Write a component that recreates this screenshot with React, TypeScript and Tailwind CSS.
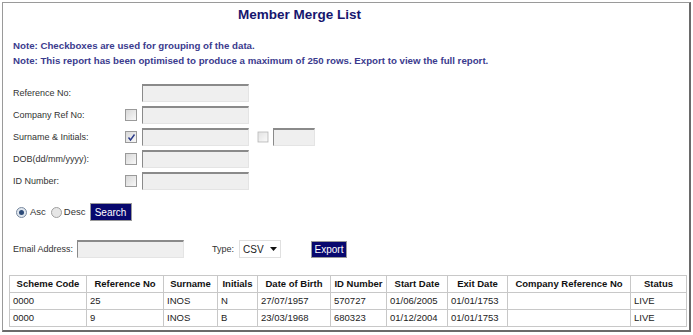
import React from 'react';

const font = { fontFamily: '"Liberation Sans", Arial, sans-serif' };

function Box({ checked = false }: { checked?: boolean }) {
  return (
    <span className="flex h-[12px] w-[12px] items-center justify-center border border-[#9a9a9a] bg-gradient-to-br from-[#d8d8d8] to-[#f8f8f8]">
      {checked && (
        <svg width="9" height="9" viewBox="0 0 9 9">
          <path d="M1.5 4.5 L3.5 7 L7.5 1.5" fill="none" stroke="#2a3a8a" strokeWidth="1.4" />
        </svg>
      )}
    </span>
  );
}

function Field({ w = 'w-[107px]' }: { w?: string }) {
  return <span className={`block h-[18px] shrink-0 ${w} border-t-2 border-l border-t-[#8a8a8a] border-l-[#8a8a8a] border-r border-b border-r-[#e4e4e4] border-b-[#e4e4e4] bg-[#efefef]`} />;
}

function Row({ label, box, checked, extra }: { label: string; box?: boolean; checked?: boolean; extra?: boolean }) {
  return (
    <div className="flex h-[22px] items-center">
      <span className="w-[122px] shrink-0 pl-[10px] text-[9px] text-[#333]">{label}</span>
      <span className="w-[17px] shrink-0">{box && <Box checked={checked} />}</span>
      <Field />
      {extra && (
        <>
          <span className="ml-[8px] mr-[4px] scale-90 opacity-70">
            <Box />
          </span>
          <Field w="w-[42px]" />
        </>
      )}
    </div>
  );
}

const rows = [
  ['0000', '25', 'INOS', 'N', '27/07/1957', '570727', '01/06/2005', '01/01/1753', '', 'LIVE'],
  ['0000', '9', 'INOS', 'B', '23/03/1968', '680323', '01/12/2004', '01/01/1753', '', 'LIVE'],
];
const heads = ['Scheme Code', 'Reference No', 'Surname', 'Initials', 'Date of Birth', 'ID Number', 'Start Date', 'Exit Date', 'Company Reference No', 'Status'];
const widths = [77, 77, 54, 40, 73, 56, 61, 60, 123, 56];

export default function App() {
  return (
    <div className="h-[335px] w-[693px] bg-white" style={font}>
      <div className="ml-[2px] mt-[2px] h-[330px] w-[689px] border-l border-t border-[#9a9a9a] border-r-2 border-b-2 border-r-[#6a6a6a] border-b-[#6a6a6a]">
        <div className="w-[593px] pt-[2px] text-center text-[13.5px] font-bold text-[#16166e]">Member Merge List</div>
        <div className="mt-[13px] pl-[10px] text-[9.7px] font-bold leading-[15px] text-[#3b3b8e]">
          <p>Note: Checkboxes are used for grouping of the data.</p>
          <p>Note: This report has been optimised to produce a maximum of 250 rows. Export to view the full report.</p>
        </div>
        <div className="mt-[14px]">
          <Row label="Reference No:" />
          <Row label="Company Ref No:" box />
          <Row label="Surname & Initials:" box checked extra />
          <Row label="DOB(dd/mm/yyyy):" box />
          <Row label="ID Number:" box />
        </div>
        <div className="mt-[11px] flex h-[18px] items-center pl-[13px] text-[9.5px] text-[#333]">
          <span className="flex h-[11px] w-[11px] items-center justify-center rounded-full border border-[#7a8aa0] bg-[#dfe6ee]">
            <span className="h-[5px] w-[5px] rounded-full bg-[#2c4a78]" />
          </span>
          <span className="ml-[3px]">Asc</span>
          <span className="ml-[5px] h-[11px] w-[11px] rounded-full border border-[#a0a0a0] bg-[#e6e6e6]" />
          <span className="ml-[2px]">Desc</span>
          <span className="ml-[4px] flex h-[18px] w-[42px] items-center justify-center border border-[#9a9a9a] bg-[#08086e] text-[10px] text-white">Search</span>
        </div>
        <div className="mt-[19px] flex h-[18px] items-center pl-[10px] text-[9px] text-[#333]">
          <span className="w-[64px] shrink-0 whitespace-nowrap">Email Address:</span>
          <Field />
          <span className="ml-[28px] w-[27px]">Type:</span>
          <span className="flex h-[18px] w-[42px] items-center justify-between border border-[#e0e0e0] bg-white px-[3px] text-[10px] text-[#222]">
            CSV
            <svg width="7" height="4" viewBox="0 0 7 4"><path d="M0 0 L7 0 L3.5 4 Z" fill="#111" /></svg>
          </span>
          <span className="ml-[30px] flex h-[17px] w-[36px] items-center justify-center border border-[#9a9a9a] bg-[#08086e] text-[10px] text-white">Export</span>
        </div>
        <table className="mt-[17px] ml-[6px] border-collapse border border-[#a8a8a8] text-[9.5px] text-[#222]">
          <thead>
            <tr className="h-[17px]">
              {heads.map((h, i) => (
                <th key={h} style={{ width: widths[i] }} className="border border-[#c8c8c8] px-[3px] text-center font-bold text-[#111]">
                  {h}
                </th>
              ))}
            </tr>
          </thead>
          <tbody>
            {rows.map((r, ri) => (
              <tr key={ri} className="h-[17px]">
                {r.map((c, i) => (
                  <td key={i} className="border border-[#c8c8c8] px-[3px] text-left">
                    {c}
                  </td>
                ))}
              </tr>
            ))}
          </tbody>
        </table>
      </div>
    </div>
  );
}
